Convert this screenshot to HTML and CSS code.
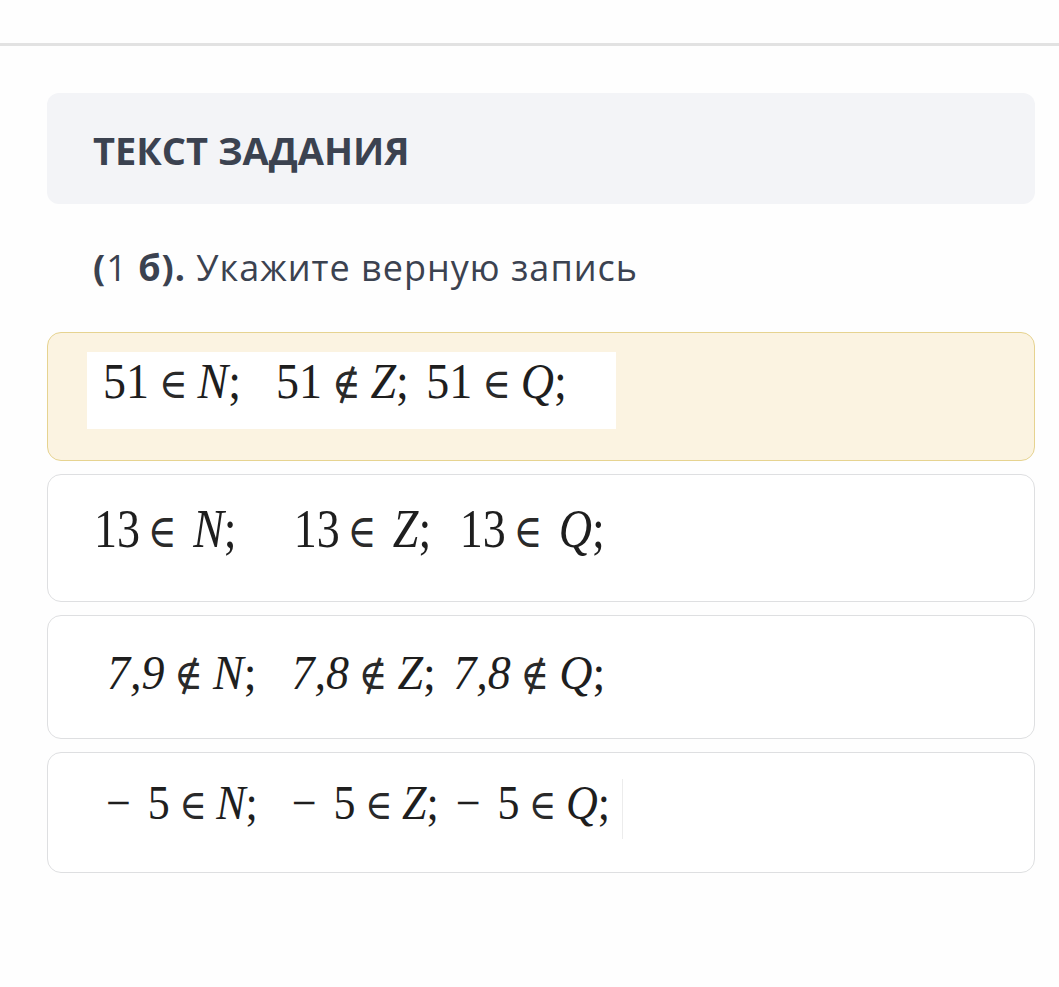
FILE: index.html
```html
<!DOCTYPE html>
<html lang="ru">
<head>
<meta charset="utf-8">
<link rel="stylesheet" href="styles.css">
</head>
<body>
<div class="topbar"></div>
<main class="content">
  <section class="task-head">
    <h2 class="task-title">ТЕКСТ ЗАДАНИЯ</h2>
  </section>
  <p class="question"><b>(</b>1 <b>б).</b> Укажите верную запись</p>
  <div class="options">
    <div class="option option-selected opt1">
      <div class="pic pic1"><span class="math m1">51<span class="el">∈</span><i>N</i>;&nbsp; 51<span class="el">∉</span><i>Z</i>; 51<span class="el">∈</span><i>Q</i>;</span></div>
    </div>
    <div class="option opt2">
      <div class="pic"><span class="math m2">13<span class="el">∈</span><i>N</i>;&nbsp; 13<span class="el">∈</span><i>Z</i>; 13<span class="el">∈</span><i>Q</i>;</span></div>
    </div>
    <div class="option opt3">
      <div class="pic"><span class="math m3"><i>7,9</i><span class="el">∉</span><i>N</i>;&nbsp; <i>7,8</i><span class="el">∉</span><i>Z</i>; <i>7,8</i><span class="el">∉</span><i>Q</i>;</span></div>
    </div>
    <div class="option opt4">
      <div class="pic pic4"><span class="math m4">− 5<span class="el">∈</span><i>N</i>;&nbsp; − 5<span class="el">∈</span><i>Z</i>; − 5<span class="el">∈</span><i>Q</i>;</span></div>
    </div>
  </div>
</main>
</body>
</html>
```

FILE: styles.css
```css
* { box-sizing: border-box; }
html, body { margin: 0; padding: 0; background: #fefefe; }
body {
  font-family: "Open Sans", "Noto Sans", sans-serif;
  color: #3b4250;
  width: 1059px;
}
.topbar {
  height: 46px;
  border-bottom: 3px solid #e2e2e2;
}
.content {
  padding: 47px 24px 0 47px;
  display: flex;
  flex-direction: column;
}
.task-head {
  background: #f3f4f7;
  border-radius: 12px;
  height: 111px;
  display: flex;
  align-items: center;
  padding-left: 46px;
}
.task-title {
  margin: 0;
  font-size: 38px;
  font-weight: 700;
  color: #3b4250;
  padding-top: 2px;
}
.question {
  margin: 36px 0 0 46px;
  font-size: 36px;
  letter-spacing: 1px;
  line-height: 56px;
  height: 92px;
  color: #3b4250;
}
.question b { font-weight: 700; }
.options {
  display: flex;
  flex-direction: column;
  gap: 13px;
}
.option {
  border: 1.5px solid #dedfe1;
  border-radius: 14px;
  background: #ffffff;
}
.option-selected {
  background: #fbf3e1;
  border-color: #e6d390;
}
.opt1 { height: 129px; padding: 18.5px 0 0 39px; }
.opt2 { height: 128px; padding: 27px 0 0 46px; }
.opt3 { height: 124px; padding: 32px 0 0 59px; }
.opt4 { height: 121px; padding: 26px 0 0 58px; }
.pic {
  display: block;
  width: fit-content;
}
.pic1 {
  background: #ffffff;
  width: 529px;
  height: 77px;
  padding: 5px 0 0 16px;
}
.pic4 {
  border-right: 1px solid #ececec;
  padding-right: 12px;
  height: 60px;
}
.math {
  display: block;
  line-height: 1;
  font-family: "Liberation Serif", serif;
  color: #1e1e1e;
  white-space: pre;
  transform-origin: left top;
}
.math i { font-style: italic; }
.el {
  font-family: "DejaVu Serif", serif;
  font-size: 0.85em;
  font-weight: 400;
  margin: 0 0.25em;
  color: #2a2a2a;
}
.m1 { font-size: 46px; word-spacing: 6px; transform: scaleY(1.08); }
.m2 { font-size: 46px; word-spacing: 17px; transform: scaleY(1.18); }
.m2 .el { margin: 0 0.42em 0 0.2em; }
.m3 { font-size: 46px; word-spacing: 6px; transform: scaleY(1.07); }
.m4 { font-size: 44px; word-spacing: 6px; transform: scaleY(1.1); }
```
